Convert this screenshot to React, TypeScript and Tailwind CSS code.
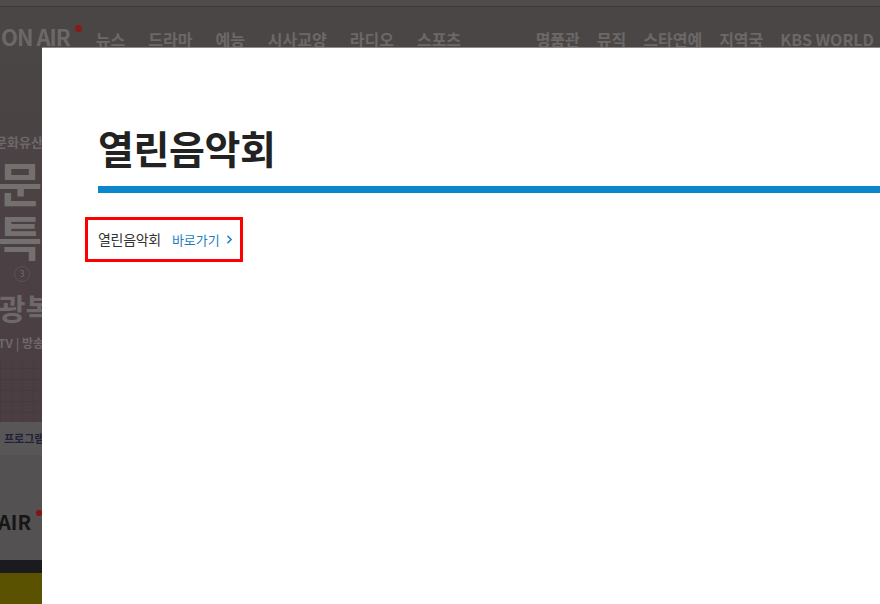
import { ChevronRight } from "lucide-react";

const leftNav = ["뉴스", "드라마", "예능", "시사교양", "라디오", "스포츠"];
const rightNav = ["명품관", "뮤직", "스타연예", "지역국", "KBS WORLD"];

function Header() {
    return (
        <div className="h-[47px] bg-[#4a4646] flex flex-col">
            <div className="h-[7px] bg-[#504c4c] border-b border-[#3d3a3a]" />
            <div className="flex-1 overflow-hidden flex items-end text-[16px] font-bold text-[#6c6868] whitespace-nowrap">
                <div className="flex items-end ml-[1px] -mb-[6px]">
                    <span className="text-[22px] tracking-[-1px]">ON AIR</span>
                    <span className="w-[7px] h-[7px] rounded-full bg-[#8a1a1a] mb-[21px] ml-[5px]" />
                </div>
                <div className="flex gap-[23px] ml-[14px] -mb-[4px]">
                    {leftNav.map((n) => (
                        <span key={n}>{n}</span>
                    ))}
                </div>
                <div className="flex gap-[17px] ml-auto mr-[6px] -mb-[4px]">
                    {rightNav.map((n) => (
                        <span key={n}>{n}</span>
                    ))}
                </div>
            </div>
        </div>
    );
}

function BackdropStrip() {
    return (
        <div className="w-[42px] shrink-0 overflow-hidden flex flex-col whitespace-nowrap">
            <div className="h-[375px] bg-gradient-to-b from-[#4a4646] via-[#4b4043] to-[#4a3e42] flex flex-col text-[#6f6869]">
                <div className="mt-[85px] -ml-[5px] text-[13px] font-bold">문화유산</div>
                <div className="mt-[2px] -ml-[2px] text-[48px] font-bold leading-[54px] text-[#757070]">문화</div>
                <div className="-ml-[2px] text-[48px] font-bold leading-[54px] text-[#757070]">특별</div>
                <div className="mt-[4px] ml-[14px] w-[16px] h-[16px] rounded-full border border-[#5a5254] flex items-center justify-center text-[9px]">3</div>
                <div className="mt-[6px] -ml-[2px] text-[30px] font-bold leading-[38px]">광복</div>
                <div className="mt-[8px] -ml-[2px] text-[12px] font-bold">TV | 방송</div>
                <div className="flex-1 mt-[6px] bg-[linear-gradient(90deg,#453a3d_1px,transparent_1px),linear-gradient(0deg,#453a3d_1px,transparent_1px)] bg-[length:11px_11px]" />
            </div>
            <div className="h-[33px] bg-[#595657] flex items-center pl-[4px] text-[11px] font-bold text-[#1f2238]">프로그램</div>
            <div className="flex-1 bg-[#535151] flex flex-col">
                <div className="mt-[52px] -ml-[2px] flex items-start text-[20px] font-bold text-[#161616]">
                    AIR
                    <span className="w-[6px] h-[6px] rounded-full bg-[#8a1212] mt-[3px] ml-[5px]" />
                </div>
                <div className="mt-auto h-[13px] bg-[#1b1b1f]" />
                <div className="h-[31px] bg-[#5a5200]" />
            </div>
        </div>
    );
}

export default function App() {
    return (
        <div className="w-[880px] h-[604px] overflow-hidden flex flex-col bg-[#4a4646] font-['Noto_Sans_CJK_KR','Noto_Sans',sans-serif]">
            <Header />
            <div className="flex-1 flex min-h-0">
                <BackdropStrip />
                <div className="flex-1 bg-white border-t border-[#8d8b8b] pl-[56px]">
                    <h1 className="mt-[73px] text-[39px] font-bold leading-[52px] text-[#222] tracking-[-0.4px]">
                        열린음악회
                    </h1>
                    <div className="mt-[13px] h-[7px] bg-[#0a86cd]" />
                    <div className="mt-[24px] -ml-[13px] w-[158px] h-[45px] border-[3px] border-[#ff0000] flex items-center pl-[10px]">
                        <span className="text-[14px] tracking-[-0.3px] text-[#333]">열린음악회</span>
                        <span className="ml-[11px] text-[13px] text-[#1e7fc0]">바로가기</span>
                        <ChevronRight className="ml-[3px] w-[13px] h-[13px] text-[#1e7fc0]" strokeWidth={3} />
                    </div>
                </div>
            </div>
        </div>
    );
}
